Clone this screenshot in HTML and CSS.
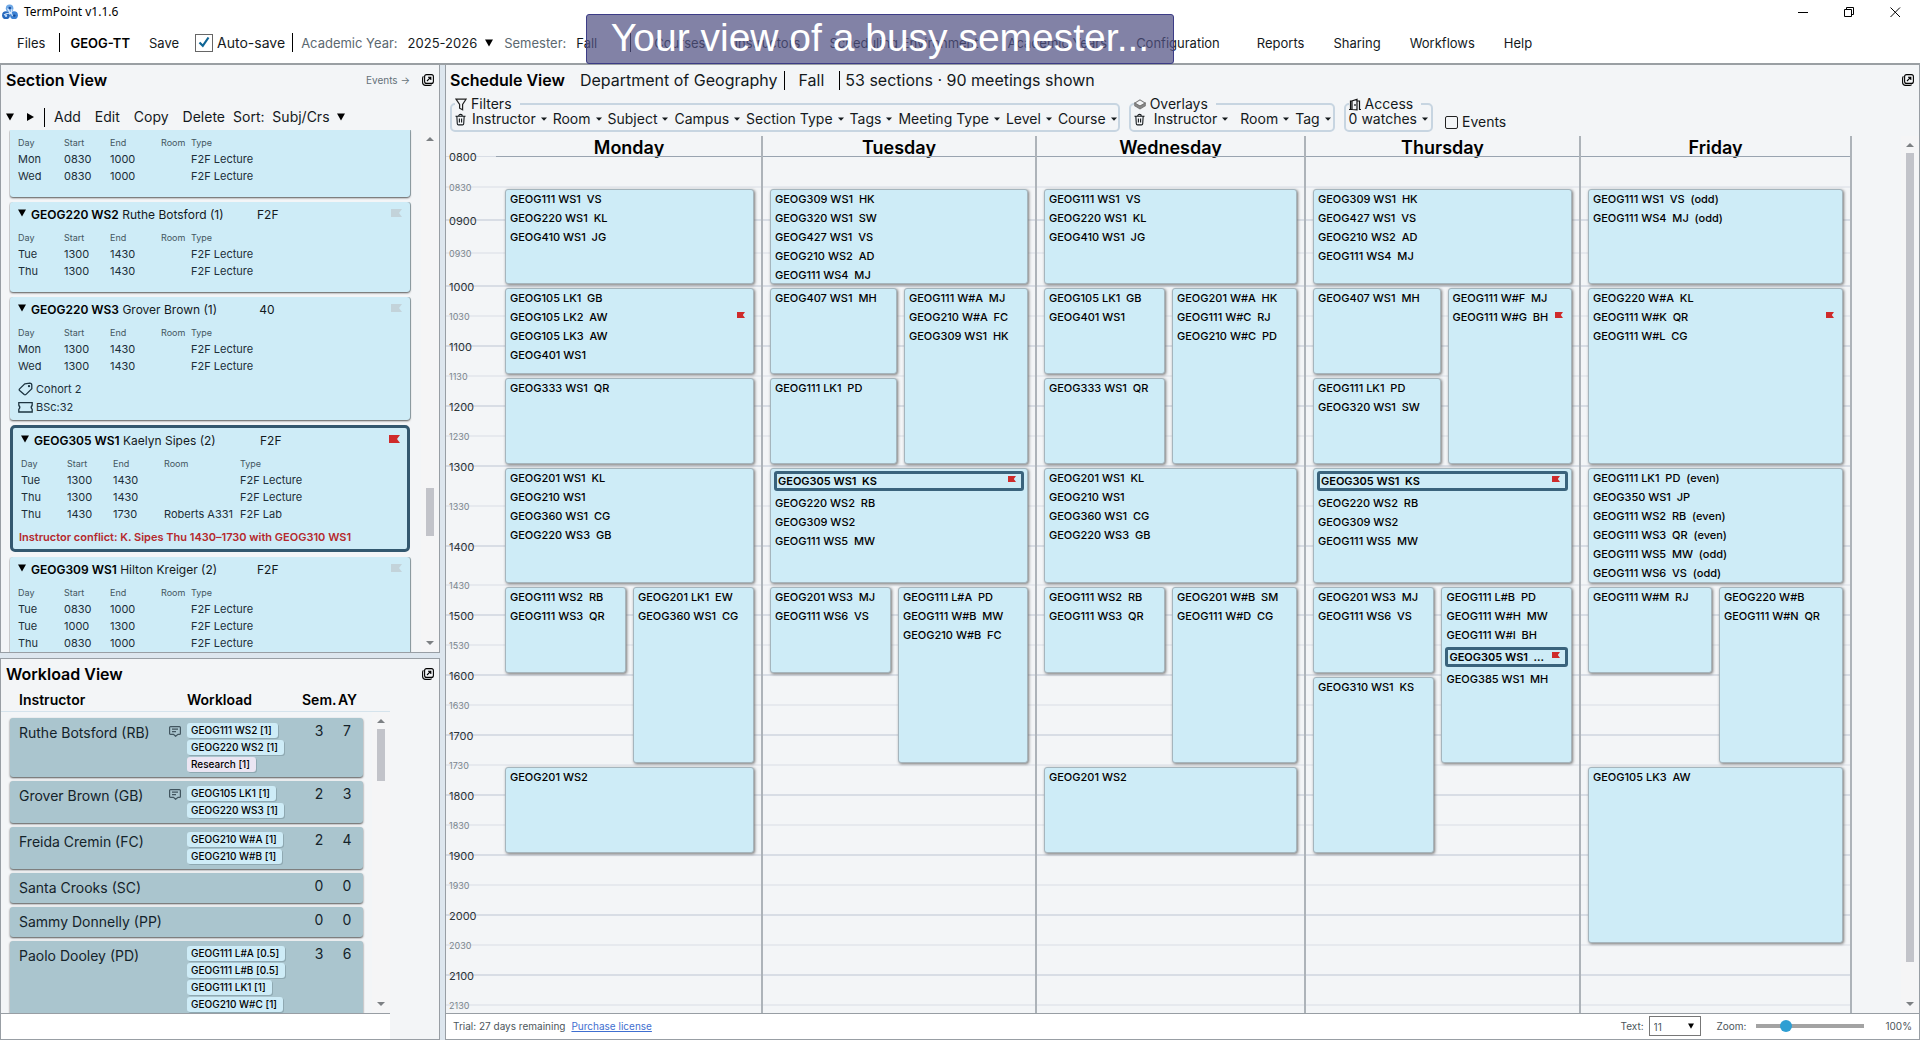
FILE: index.html
```html
<!DOCTYPE html>
<html lang="en">
<head>
<meta charset="utf-8">
<title>TermPoint v1.1.6</title>
<link rel="stylesheet" href="styles.css">
</head>
<body>
<svg class="defs" aria-hidden="true">
  <symbol id="flag" viewBox="0 0 11 8"><path d="M0 0H11L8 4L11 8H0Z" fill="currentColor"/></symbol>
  <symbol id="down" viewBox="0 0 8 8"><path d="M0 0.5H8L4 7.5Z" fill="currentColor"/></symbol>
  <symbol id="caret" viewBox="0 0 6 4"><path d="M0 0.5H6L3 3.8Z" fill="currentColor"/></symbol>
  <symbol id="right" viewBox="0 0 8 8"><path d="M1 0V8L8 4Z" fill="currentColor"/></symbol>
  <symbol id="sb-up" viewBox="0 0 8 4"><path d="M0 4H8L4 0Z" fill="currentColor"/></symbol>
  <symbol id="sb-down" viewBox="0 0 8 4"><path d="M0 0H8L4 4Z" fill="currentColor"/></symbol>
  <symbol id="popout" viewBox="0 0 12 12"><g fill="none" stroke="currentColor" stroke-width="1.1"><rect x="2.6" y="0.6" width="8.8" height="8.8" rx="2"/><path d="M1.4 2.4C0.7 3 .6 3.600.6 4.500V8.500A3 3 0 0 0 3.600 11.400H7.500C8.400 11.400 9 11.300 9.600 10.600M5 7L8.600 3.400M6 3.200H8.800V6"/></g></symbol>
  <symbol id="trash" viewBox="0 0 12 13"><g fill="none" stroke="currentColor" stroke-width="1.2"><path d="M0.500 3H11.500M4 2.800C4 .3 8 .3 8 2.800M2 3L2.500 11.200Q2.600 12.400 3.800 12.400H8.200Q9.400 12.400 9.500 11.200L10 3M4.800 5.500V9.800M7.200 5.500V9.800"/></g></symbol>
  <symbol id="note" viewBox="0 0 12 11"><g fill="none" stroke="currentColor" stroke-width="1.200"><path d="M1.600.6H10.400Q11.400.6 11.400 1.600V7.400Q11.400 8.400 10.400 8.400H9L6.600 10.300L4.500 8.400H1.600Q.6 8.400.6 7.400V1.600Q.6.6 1.600.6ZM3 3.200H9M3 5.600H7"/></g></symbol>
</svg>

<header class="titlebar">
  <svg class="logo" viewBox="0 0 16 16">
    <circle cx="7.600" cy="4.200" r="3.800" fill="#6fa8e6"/><circle cx="4" cy="11.200" r="3.900" fill="#2668bd"/><circle cx="12" cy="11.200" r="3.900" fill="#3c82d4"/>
    <path d="M5.500 4.500Q8 7 7.500 10.500M10 5Q8.500 8 10.500 12M2 11Q5 8.500 9 9.500" fill="none" stroke="#d8e9fb" stroke-width="1.100"/>
    <circle cx="7.800" cy="4" r="1.300" fill="#1c4f9c"/><circle cx="4" cy="11.800" r="1.200" fill="#bcd9f7"/><circle cx="12.300" cy="11.600" r="1.200" fill="#164a96"/>
  </svg>
  <span class="app-name">TermPoint v1.1.6</span>
  <div class="window-buttons">
    <button aria-label="Minimize"><svg width="11" height="11"><path d="M0 5.500H10" stroke="#000"/></svg></button>
    <button aria-label="Restore"><svg width="11" height="11" fill="none" stroke="#000"><path d="M.5 2.500H7.500V9.500H.5ZM2.500 2.500V.5H9.500V7.500H7.500"/></svg></button>
    <button aria-label="Close"><svg width="11" height="11" stroke="#000"><path d="M.5.5L10 10M10 .5L.5 10"/></svg></button>
  </div>
</header>

<nav class="menubar">
  <button>Files</button>
  <i class="sep"></i>
  <strong class="db-name">GEOG-TT</strong>
  <button class="save">Save</button>
  <label class="autosave"><input type="checkbox" checked><svg viewBox="0 0 12 12"><path d="M1.500 6.500L4.800 9.800L10.500 1.500" fill="none" stroke="#0f6595" stroke-width="2.200"/></svg>Auto-save</label>
  <i class="sep"></i>
  <span class="muted">Academic Year:</span>
  <button class="picker">2025-2026 <svg class="i8"><use href="#down"/></svg></button>
  <span class="muted">Semester:</span>
  <button class="picker">Fall</button>
  <i class="sep menu-sep"></i>
  <div class="menu">
    <button>Courses</button><button>Instructors</button><button>Scheduling Environment</button><button>Academic Years</button><button>Configuration</button><button class="apart">Reports</button><button>Sharing</button><button>Workflows</button><button>Help</button>
  </div>
  <div class="banner">Your view of a busy semester...</div>
</nav>

<main class="workspace">
  <div class="side">
    <section class="panel sections">
      <div class="panel-head">
        <h2>Section View</h2>
        <a class="events-link" href="#events">Events →</a>
        <button aria-label="Pop out"><svg class="i12"><use href="#popout"/></svg></button>
      </div>
      <div class="toolbar">
        <button aria-label="Expand all"><svg class="i8"><use href="#down"/></svg></button>
        <button aria-label="Collapse all" class="collapse"><svg class="i8"><use href="#right"/></svg></button>
        <i class="sep"></i>
        <button>Add</button><button>Edit</button><button>Copy</button><button>Delete</button>
        <button class="sort">Sort:&nbsp; Subj/Crs <svg class="i8"><use href="#down"/></svg></button>
      </div>
      <div class="scroller">
        <div class="cards">
          <article class="card card-cut">
            <table class="meet"><thead><tr><th>Day</th><th>Start</th><th>End</th><th>Room</th><th>Type</th></tr></thead>
            <tbody><tr><td>Mon</td><td>0830</td><td>1000</td><td></td><td>F2F Lecture</td></tr>
            <tr><td>Wed</td><td>0830</td><td>1000</td><td></td><td>F2F Lecture</td></tr></tbody></table>
          </article>
          <article class="card">
            <div class="card-title"><svg class="i8"><use href="#down"/></svg><p><b>GEOG220 WS2</b> Ruthe Botsford (1)</p><span class="mode">F2F</span><svg class="flag"><use href="#flag"/></svg></div>
            <table class="meet"><thead><tr><th>Day</th><th>Start</th><th>End</th><th>Room</th><th>Type</th></tr></thead>
            <tbody><tr><td>Tue</td><td>1300</td><td>1430</td><td></td><td>F2F Lecture</td></tr>
            <tr><td>Thu</td><td>1300</td><td>1430</td><td></td><td>F2F Lecture</td></tr></tbody></table>
          </article>
          <article class="card">
            <div class="card-title"><svg class="i8"><use href="#down"/></svg><p><b>GEOG220 WS3</b> Grover Brown (1)</p><span class="mode">40</span><svg class="flag"><use href="#flag"/></svg></div>
            <table class="meet"><thead><tr><th>Day</th><th>Start</th><th>End</th><th>Room</th><th>Type</th></tr></thead>
            <tbody><tr><td>Mon</td><td>1300</td><td>1430</td><td></td><td>F2F Lecture</td></tr>
            <tr><td>Wed</td><td>1300</td><td>1430</td><td></td><td>F2F Lecture</td></tr></tbody></table>
            <ul class="extras">
              <li><svg viewBox="0 0 15 14" fill="none" stroke="#1d3440" stroke-width="1.300"><path d="M6.800 1.800L11.800 1.200Q13.800 1.200 13.800 3.200V6.800L7.800 12.600Q7 13.200 6.200 12.600L1.600 8.500Q.8 7.700 1.600 6.900Z"/><circle cx="11" cy="4.200" r=".5"/></svg>Cohort 2</li>
              <li><svg viewBox="0 0 15 14" fill="none" stroke="#1d3440" stroke-width="1.300"><path d="M.8 2.700H14.200V5.200Q12.200 7.300 14.200 9.400V12H.8V9.400Q2.800 7.300.8 5.200Z"/></svg>BSc:32</li>
            </ul>
          </article>
          <article class="card selected">
            <div class="card-title"><svg class="i8"><use href="#down"/></svg><p><b>GEOG305 WS1</b> Kaelyn Sipes (2)</p><span class="mode">F2F</span><svg class="flag red"><use href="#flag"/></svg></div>
            <table class="meet wide-room"><thead><tr><th>Day</th><th>Start</th><th>End</th><th>Room</th><th>Type</th></tr></thead>
            <tbody><tr><td>Tue</td><td>1300</td><td>1430</td><td></td><td>F2F Lecture</td></tr>
            <tr><td>Thu</td><td>1300</td><td>1430</td><td></td><td>F2F Lecture</td></tr>
            <tr><td>Thu</td><td>1430</td><td>1730</td><td>Roberts A331</td><td>F2F Lab</td></tr></tbody></table>
            <p class="conflict">Instructor conflict: K. Sipes Thu 1430–1730 with GEOG310 WS1</p>
          </article>
          <article class="card">
            <div class="card-title"><svg class="i8"><use href="#down"/></svg><p><b>GEOG309 WS1</b> Hilton Kreiger (2)</p><span class="mode">F2F</span><svg class="flag"><use href="#flag"/></svg></div>
            <table class="meet"><thead><tr><th>Day</th><th>Start</th><th>End</th><th>Room</th><th>Type</th></tr></thead>
            <tbody><tr><td>Tue</td><td>0830</td><td>1000</td><td></td><td>F2F Lecture</td></tr>
            <tr><td>Tue</td><td>1000</td><td>1300</td><td></td><td>F2F Lecture</td></tr>
            <tr><td>Thu</td><td>0830</td><td>1000</td><td></td><td>F2F Lecture</td></tr></tbody></table>
          </article>
        </div>
        <div class="scrollbar sb-sections"><svg><use href="#sb-up"/></svg><div class="track"><i></i></div><svg><use href="#sb-down"/></svg></div>
      </div>
    </section>

    <section class="panel workload">
      <div class="panel-head">
        <h2>Workload View</h2>
        <button aria-label="Pop out"><svg class="i12"><use href="#popout"/></svg></button>
      </div>
      <div class="load-body">
        <div class="load-cols load-head"><span>Instructor</span><span></span><span>Workload</span><span class="num">Sem.</span><span>AY</span></div>
        <div class="scroller">
          <div class="loads">
            <div class="load load-cols"><span class="name">Ruthe Botsford (RB)</span><svg class="note"><use href="#note"/></svg><div class="chips"><span>GEOG111 WS2 [1]</span><span>GEOG220 WS2 [1]</span><span class="other">Research [1]</span></div><span class="num">3</span><span class="num">7</span></div>
            <div class="load load-cols"><span class="name">Grover Brown (GB)</span><svg class="note"><use href="#note"/></svg><div class="chips"><span>GEOG105 LK1 [1]</span><span>GEOG220 WS3 [1]</span></div><span class="num">2</span><span class="num">3</span></div>
            <div class="load load-cols"><span class="name">Freida Cremin (FC)</span><i></i><div class="chips"><span>GEOG210 W#A [1]</span><span>GEOG210 W#B [1]</span></div><span class="num">2</span><span class="num">4</span></div>
            <div class="load load-cols"><span class="name">Santa Crooks (SC)</span><i></i><div class="chips"></div><span class="num">0</span><span class="num">0</span></div>
            <div class="load load-cols"><span class="name">Sammy Donnelly (PP)</span><i></i><div class="chips"></div><span class="num">0</span><span class="num">0</span></div>
            <div class="load load-cols"><span class="name">Paolo Dooley (PD)</span><i></i><div class="chips"><span>GEOG111 L#A [0.5]</span><span>GEOG111 L#B [0.5]</span><span>GEOG111 LK1 [1]</span><span>GEOG210 W#C [1]</span></div><span class="num">3</span><span class="num">6</span></div>
          </div>
          <div class="scrollbar sb-load"><svg><use href="#sb-up"/></svg><div class="track"><i></i></div><svg><use href="#sb-down"/></svg></div>
        </div>
        <div class="load-foot"></div>
      </div>
    </section>
  </div>

  <section class="panel schedule">
    <div class="panel-head">
      <h2>Schedule View</h2>
      <span class="dept">Department of Geography</span><i class="sep"></i><span class="term">Fall</span><i class="sep"></i><span class="counts">53 sections · 90 meetings shown</span>
      <button aria-label="Pop out"><svg class="i12"><use href="#popout"/></svg></button>
    </div>
    <div class="filters">
      <fieldset>
        <legend><svg viewBox="0 0 12 13" fill="none" stroke="#222" stroke-width="1.200"><path d="M1 1.200H11L7.600 6.500V11.800L4.600 10.200V6.500Z"/></svg>Filters</legend>
        <button aria-label="Clear filters"><svg class="trash"><use href="#trash"/></svg></button>
        <button>Instructor<svg class="caret"><use href="#caret"/></svg></button><button>Room<svg class="caret"><use href="#caret"/></svg></button><button>Subject<svg class="caret"><use href="#caret"/></svg></button><button>Campus<svg class="caret"><use href="#caret"/></svg></button><button>Section Type<svg class="caret"><use href="#caret"/></svg></button><button>Tags<svg class="caret"><use href="#caret"/></svg></button><button>Meeting Type<svg class="caret"><use href="#caret"/></svg></button><button>Level<svg class="caret"><use href="#caret"/></svg></button><button>Course<svg class="caret"><use href="#caret"/></svg></button>
      </fieldset>
      <fieldset class="overlays">
        <legend><svg viewBox="0 0 13 13" fill="none" stroke="#777" stroke-width="1.100"><path d="M6.500 1.500L12.200 5L6.500 8.300L.8 5Z"/><path d="M.8 5V7.800L6.500 11.200L12.200 7.800V5L6.500 8.300Z" fill="#8a8a8a"/></svg>Overlays</legend>
        <button aria-label="Clear overlays"><svg class="trash"><use href="#trash"/></svg></button>
        <button class="by-person">Instructor<svg class="caret"><use href="#caret"/></svg></button><button>Room<svg class="caret"><use href="#caret"/></svg></button><button>Tag<svg class="caret"><use href="#caret"/></svg></button>
      </fieldset>
      <fieldset class="access">
        <legend><svg viewBox="0 0 12 12" fill="none" stroke="#111" stroke-width="1.200"><path d="M0 11H3V2.500L8 .8V11.400L3 11M8 2.500H10.500V11H12M6 5.500V7.500M1.500 11V2.500H3"/></svg>Access</legend>
        <button>0 watches<svg class="caret"><use href="#caret"/></svg></button>
      </fieldset>
      <label class="show-events"><input type="checkbox">Events</label>
    </div>

    <div class="timetable">
      <div class="week">
        <div class="day-names"><span></span><h3>Monday</h3><h3>Tuesday</h3><h3>Wednesday</h3><h3>Thursday</h3><h3>Friday</h3></div>
        <div class="grid">
          <div class="times">
            <span>0800</span><span>0830</span><span>0900</span><span>0930</span><span>1000</span><span>1030</span><span>1100</span><span>1130</span><span>1200</span><span>1230</span><span>1300</span><span>1330</span><span>1400</span><span>1430</span><span>1500</span><span>1530</span><span>1600</span><span>1630</span><span>1700</span><span>1730</span><span>1800</span><span>1830</span><span>1900</span><span>1930</span><span>2000</span><span>2030</span><span>2100</span><span>2130</span>
          </div>

          <div class="day">
            <ul class="block" style="grid-row:2/5"><li>GEOG111 WS1  VS</li><li>GEOG220 WS1  KL</li><li>GEOG410 WS1  JG</li></ul>
            <ul class="block" style="grid-row:5/8"><li>GEOG105 LK1  GB</li><li>GEOG105 LK2  AW<svg class="flag"><use href="#flag"/></svg></li><li>GEOG105 LK3  AW</li><li>GEOG401 WS1</li></ul>
            <ul class="block" style="grid-row:8/11"><li>GEOG333 WS1  QR</li></ul>
            <ul class="block" style="grid-row:11/14"><li>GEOG201 WS1  KL</li><li>GEOG210 WS1</li><li>GEOG360 WS1  CG</li><li>GEOG220 WS3  GB</li></ul>
            <div class="split" style="grid-row:14/20">
              <ul class="block" style="grid-row:1/4"><li>GEOG111 WS2  RB</li><li>GEOG111 WS3  QR</li></ul>
              <ul class="block" style="grid-row:1/7"><li>GEOG201 LK1  EW</li><li>GEOG360 WS1  CG</li></ul>
            </div>
            <ul class="block" style="grid-row:20/23"><li>GEOG201 WS2</li></ul>
          </div>

          <div class="day">
            <ul class="block" style="grid-row:2/5"><li>GEOG309 WS1  HK</li><li>GEOG320 WS1  SW</li><li>GEOG427 WS1  VS</li><li>GEOG210 WS2  AD</li><li>GEOG111 WS4  MJ</li></ul>
            <div class="split early" style="grid-row:5/11">
              <ul class="block" style="grid-row:1/4"><li>GEOG407 WS1  MH</li></ul>
              <ul class="block" style="grid-row:4/7"><li>GEOG111 LK1  PD</li></ul>
              <ul class="block second" style="grid-row:1/7"><li>GEOG111 W#A  MJ</li><li>GEOG210 W#A  FC</li><li>GEOG309 WS1  HK</li></ul>
            </div>
            <ul class="block" style="grid-row:11/14"><li class="picked">GEOG305 WS1  KS<svg class="flag"><use href="#flag"/></svg></li><li>GEOG220 WS2  RB</li><li>GEOG309 WS2</li><li>GEOG111 WS5  MW</li></ul>
            <div class="split late" style="grid-row:14/20">
              <ul class="block" style="grid-row:1/4"><li>GEOG201 WS3  MJ</li><li>GEOG111 WS6  VS</li></ul>
              <ul class="block" style="grid-row:1/7"><li>GEOG111 L#A  PD</li><li>GEOG111 W#B  MW</li><li>GEOG210 W#B  FC</li></ul>
            </div>
          </div>

          <div class="day">
            <ul class="block" style="grid-row:2/5"><li>GEOG111 WS1  VS</li><li>GEOG220 WS1  KL</li><li>GEOG410 WS1  JG</li></ul>
            <div class="split midweek" style="grid-row:5/11">
              <ul class="block" style="grid-row:1/4"><li>GEOG105 LK1  GB</li><li>GEOG401 WS1</li></ul>
              <ul class="block" style="grid-row:4/7"><li>GEOG333 WS1  QR</li></ul>
              <ul class="block second" style="grid-row:1/7"><li>GEOG201 W#A  HK</li><li>GEOG111 W#C  RJ</li><li>GEOG210 W#C  PD</li></ul>
            </div>
            <ul class="block" style="grid-row:11/14"><li>GEOG201 WS1  KL</li><li>GEOG210 WS1</li><li>GEOG360 WS1  CG</li><li>GEOG220 WS3  GB</li></ul>
            <div class="split midweek" style="grid-row:14/20">
              <ul class="block" style="grid-row:1/4"><li>GEOG111 WS2  RB</li><li>GEOG111 WS3  QR</li></ul>
              <ul class="block" style="grid-row:1/7"><li>GEOG201 W#B  SM</li><li>GEOG111 W#D  CG</li></ul>
            </div>
            <ul class="block" style="grid-row:20/23"><li>GEOG201 WS2</li></ul>
          </div>

          <div class="day">
            <ul class="block" style="grid-row:2/5"><li>GEOG309 WS1  HK</li><li>GEOG427 WS1  VS</li><li>GEOG210 WS2  AD</li><li>GEOG111 WS4  MJ</li></ul>
            <div class="split early" style="grid-row:5/11">
              <ul class="block" style="grid-row:1/4"><li>GEOG407 WS1  MH</li></ul>
              <ul class="block" style="grid-row:4/7"><li>GEOG111 LK1  PD</li><li>GEOG320 WS1  SW</li></ul>
              <ul class="block second" style="grid-row:1/7"><li>GEOG111 W#F  MJ</li><li>GEOG111 W#G  BH<svg class="flag"><use href="#flag"/></svg></li></ul>
            </div>
            <ul class="block" style="grid-row:11/14"><li class="picked">GEOG305 WS1  KS<svg class="flag"><use href="#flag"/></svg></li><li>GEOG220 WS2  RB</li><li>GEOG309 WS2</li><li>GEOG111 WS5  MW</li></ul>
            <div class="split late" style="grid-row:14/23">
              <ul class="block" style="grid-row:1/4"><li>GEOG201 WS3  MJ</li><li>GEOG111 WS6  VS</li></ul>
              <ul class="block" style="grid-row:4/10"><li>GEOG310 WS1  KS</li></ul>
              <ul class="block second" style="grid-row:1/7"><li>GEOG111 L#B  PD</li><li>GEOG111 W#H  MW</li><li>GEOG111 W#I  BH</li><li class="picked">GEOG305 WS1  ...<svg class="flag"><use href="#flag"/></svg></li><li>GEOG385 WS1  MH</li></ul>
            </div>
          </div>

          <div class="day">
            <ul class="block" style="grid-row:2/5"><li>GEOG111 WS1  VS  (odd)</li><li>GEOG111 WS4  MJ  (odd)</li></ul>
            <ul class="block" style="grid-row:5/11"><li>GEOG220 W#A  KL</li><li>GEOG111 W#K  QR<svg class="flag"><use href="#flag"/></svg></li><li>GEOG111 W#L  CG</li></ul>
            <ul class="block" style="grid-row:11/14"><li>GEOG111 LK1  PD  (even)</li><li>GEOG350 WS1  JP</li><li>GEOG111 WS2  RB  (even)</li><li>GEOG111 WS3  QR  (even)</li><li>GEOG111 WS5  MW  (odd)</li><li>GEOG111 WS6  VS  (odd)</li></ul>
            <div class="split" style="grid-row:14/20">
              <ul class="block" style="grid-row:1/4"><li>GEOG111 W#M  RJ</li></ul>
              <ul class="block" style="grid-row:1/7"><li>GEOG220 W#B</li><li>GEOG111 W#N  QR</li></ul>
            </div>
            <ul class="block" style="grid-row:20/26"><li>GEOG105 LK3  AW</li></ul>
          </div>
        </div>
      </div>
      <div class="scrollbar sb-week"><svg><use href="#sb-up"/></svg><div class="track"><i></i></div><svg><use href="#sb-down"/></svg></div>
    </div>

    <footer class="status">
      <span>Trial: 27 days remaining</span>
      <a href="#license">Purchase license</a>
      <label class="text-size" for="size">Text:</label>
      <span class="select"><select id="size"><option>11</option></select><svg class="i8"><use href="#down"/></svg></span>
      <label class="zoom-label" for="zoom">Zoom:</label>
      <input id="zoom" type="range" min="0" max="100" value="25">
      <output for="zoom">100%</output>
    </footer>
  </section>
</main>
</body>
</html>
```
FILE: styles.css
```css
* { box-sizing: border-box; }

body {
  margin: 0;
  height: 100vh;
  display: flex;
  flex-direction: column;
  overflow: hidden;
  background: #fff;
  color: #14191c;
  font-family: Inter, "Liberation Sans", sans-serif;
  font-size: 14px;
  line-height: 20px;
}

h2, h3, p, ul { margin: 0; padding: 0; }
ul { list-style: none; }
svg { display: block; flex: none; }
button {
  display: flex;
  align-items: center;
  padding: 0;
  border: 0;
  background: none;
  color: inherit;
  font: inherit;
  white-space: nowrap;
}
.defs { position: absolute; width: 0; height: 0; }
.i8 { width: 8px; height: 8px; color: #000; }
.i12 { width: 12px; height: 12px; color: #000; }
.sep { width: 1px; height: 19px; background: #000; flex: none; }

/* Title bar */
.titlebar { display: flex; align-items: center; height: 24px; padding-left: 2px; }
.logo { width: 16px; height: 16px; }
.app-name { margin-left: 6px; font: 12px/20px "Noto Sans", sans-serif; color: #000; flex: 1; }
.window-buttons { display: flex; gap: 35px; padding-right: 19px; }

/* Menu bar */
.menubar {
  position: relative;
  display: flex;
  align-items: center;
  height: 41px;
  padding: 0 0 2px 17px;
  border-bottom: 2px solid #9a9fa3;
  font-size: 13px;
  white-space: nowrap;
}
.menubar > .sep { margin: 0 10px 0 14px; }
.menubar .db-name { font-weight: 600; color: #000; }
.menubar .save { margin: 0 16px 0 19px; }
.autosave { display: flex; align-items: center; position: relative; font-size: 14px; }
.autosave input {
  appearance: none;
  width: 18px;
  height: 18px;
  margin: 0 4px 0 0;
  border: 1px solid #666;
}
.autosave svg { position: absolute; left: 3px; top: 3px; width: 12px; height: 12px; }
.menubar > .autosave + .sep { margin: 0 8px 0 7px; }
.muted { color: #5b6870; }
.picker { gap: 8px; margin: 0 11px 0 10px; }
.menubar > .menu-sep { margin: 0 23px 0 22px; }
.menu { display: flex; gap: 29px; }
.menu .apart { margin-left: 8px; }
.banner {
  position: absolute;
  left: 586px;
  top: -10px;
  width: 588px;
  height: 50px;
  border: 1px solid #3c3c86;
  border-radius: 3px;
  background: rgba(82, 82, 132, 0.72);
  color: #fff;
  font: 39px/46px "Liberation Sans", sans-serif;
  text-align: center;
}

/* Workspace */
.workspace {
  flex: 1;
  min-height: 0;
  display: grid;
  grid-template-columns: 440px minmax(0, 1fr);
  grid-template-rows: minmax(0, 1fr);
  gap: 5px;
  background: #dde6ee;
}
.side { display: grid; grid-template-rows: minmax(0, 588fr) minmax(0, 382fr); gap: 5px; }
.panel {
  display: flex;
  flex-direction: column;
  min-height: 0;
  min-width: 0;
  border: 1px solid #989ea4;
  border-top: 0;
  background: #f3f5f7;
}
.workload { border-top: 1px solid #989ea4; }
.panel-head { display: flex; align-items: center; flex: none; height: 30px; padding: 0 5px; }
.panel-head h2 { font-size: 16px; font-weight: 600; color: #000; margin-right: auto; }
.events-link { margin-right: 12px; color: #65727a; font-size: 10px; text-decoration: none; }

.toolbar { display: flex; align-items: center; flex: none; gap: 14px; height: 35px; padding: 9px 5px 0; }
.toolbar .collapse { margin-left: -2px; }
.toolbar .sep { margin: 0 -5px 0 -4px; }
.toolbar .sort { gap: 7px; margin-left: -6px; }

.scroller { flex: 1; min-height: 0; display: flex; }
.scrollbar { display: flex; flex-direction: column; align-items: center; width: 18px; padding: 7px 0; color: #7d8083; background: #f5f5f6; }
.scrollbar svg { width: 8px; height: 4px; }
.track { flex: 1; display: grid; margin: 6px 0; }
.track i { width: 8px; background: #c2c3c9; grid-row: 2; }
.sb-sections .track { grid-template-rows: 347fr 48fr 101fr; }
.sb-load .track { grid-template-rows: 0 52fr 217fr; }
.sb-week .track { grid-template-rows: 0 810fr 34fr; }

/* Section cards */
.cards { flex: 1; display: flex; flex-direction: column; gap: 5px; padding: 0 11px 0 9px; overflow: hidden; }
.card {
  flex: none;
  height: 90px;
  padding: 3px 8px 0;
  border-radius: 3px;
  background: #ceecf7;
  box-shadow: 0 1px 2px #555, 1px 0 0 #9fb3bb;
  clip-path: inset(0 -2px -3px -1px);
  font-size: 12px;
}
.card:nth-child(n+3) { height: auto; padding-bottom: 4px; }
.card-cut { height: 67px; padding-top: 5px; border-radius: 0 0 3px 3px; }
.card-title { display: grid; grid-template-columns: 13px 226px 20px 1fr; align-items: center; height: 20px; margin-bottom: 5px; white-space: nowrap; }
.card-title .i8 { margin-bottom: 5px; }
.card-title b { font-weight: 600; color: #000; }
.mode { text-align: center; }
.flag { width: 11px; height: 8px; margin: 0 0 5px auto; color: #c3d3da; }
.flag.red { color: #cf2b2b; }
.meet { border-collapse: collapse; table-layout: fixed; width: 300px; font-size: 11px; line-height: 17px; color: #1c2e38; }
.meet th, .meet td { padding: 0; text-align: left; font-weight: 400; white-space: nowrap; height: 17px; }
.meet th { font-size: 9px; line-height: 16px; height: 16px; color: #435661; width: 46px; }
.meet th:nth-child(3) { width: 51px; }
.meet th:nth-child(4) { width: 30px; }
.meet.wide-room th:nth-child(4) { width: 76px; }
.meet th:last-child { width: auto; }
.extras { margin-top: 5px; font-size: 11px; line-height: 18px; color: #1c2e38; }
.extras li { display: flex; align-items: center; gap: 3px; }
.extras svg { width: 15px; height: 14px; }
.card.selected { padding: 3px 7px 3px 8px; border: 3px solid #33586f; border-radius: 5px; box-shadow: none; }
.conflict { margin: 5px 0 0 -2px; color: #b5282c; font-size: 11px; font-weight: 600; line-height: 18px; }

/* Workload */
.load-body { flex: 1; min-height: 0; width: 389px; display: flex; flex-direction: column; }
.load-cols { display: grid; grid-template-columns: 150px 18px 115px 36px 1fr; }
.load-head { height: 23px; padding: 1px 18px 0; border-bottom: 1px solid #d5e3ec; color: #000; font-weight: 600; }
.loads { flex: 1; display: flex; flex-direction: column; gap: 4px; padding: 6px 9px 0 9px; overflow: hidden; }
.load {
  flex: none;
  min-height: 29px;
  padding: 5px 7px 5px 9px;
  border-radius: 3px;
  background: #aac5ce;
  box-shadow: 0 1px 2px #555;
  color: #14232a;
}
.load { grid-template-columns: 150px 18px 115px 34px 22px; }
.name { white-space: nowrap; }
.note { width: 12px; height: 11px; margin-top: 3px; color: #41555f; }
.load .num { text-align: center; line-height: 16px; }
.chips { display: flex; flex-direction: column; align-items: flex-start; gap: 2px; }
.chips span { padding: 0 6px 0 4px; border-radius: 3px; background: #ceecf7; box-shadow: 1px 1px 0 #8fa9b2; font-size: 10px; font-weight: 500; line-height: 15px; color: #000; white-space: nowrap; }
.chips .other { background: #ebe6f3; }
.load-foot { flex: none; height: 26px; border-top: 1px solid #989ea4; background: #fff; }

/* Schedule */
.schedule .panel-head { font-size: 16px; padding: 0 5px 0 4px; white-space: nowrap; }
.schedule .panel-head h2 { margin-right: 15px; }
.schedule .panel-head .sep { margin: 0 5px 0 7px; }
.term { margin: 0 8px; }
.counts { margin-right: auto; }

.filters { display: flex; align-items: flex-start; flex: none; height: 41px; padding: 0 4px; gap: 9px; }
fieldset {
  display: flex;
  gap: 6px;
  min-width: 0;
  height: 37px;
  margin: 0;
  padding: 0 1px 0 3px;
  border: 2px solid #c7d5e1;
  border-radius: 5px;
}
legend { display: flex; align-items: center; gap: 4px; height: 18px; padding: 0 8px 0 0; }
legend svg { width: 12px; height: 13px; }
fieldset button { gap: 5px; height: 12px; }
.caret { width: 6px; height: 4px; }
.trash { width: 11px; height: 13px; }
.overlays { padding: 0 2px 0 3px; }
.by-person { margin: 0 6px 0 3px; }
.access { padding: 0 3px; }
.show-events { display: flex; align-items: center; gap: 4px; margin: 17px 0 0 3px; }
.show-events input { appearance: none; width: 13px; height: 13px; margin: 0; border: 1px solid #222; border-radius: 2px; }

.timetable { flex: 1; min-height: 0; display: flex; }
.week {
  --cols: 51px minmax(0, 266fr) minmax(0, 274fr) minmax(0, 269fr) minmax(0, 275fr) minmax(0, 271fr);
  flex: 1;
  margin-right: 49px;
  overflow: hidden;
}
.day-names { display: grid; grid-template-columns: var(--cols); height: 20px; }
.day-names h3 { height: 20px; border-right: 2px solid #adb3b9; font-size: 18px; font-weight: 600; line-height: 24px; text-align: center; color: #000; }
.grid {
  display: grid;
  grid-template-columns: var(--cols);
  grid-template-rows: 30px repeat(3, 33px) repeat(6, 30px) 40px 40px 39px repeat(15, 30px);
}
.times { grid-area: 1 / 1 / -1 / -1; display: grid; grid-template-rows: subgrid; }
.times span { padding-left: 3px; border-top: 2px solid #d8dde5; font-size: 11px; line-height: 0; color: #2b3338; }
.times span:nth-child(even) { border-color: #e6e9ee; font-size: 9px; color: #7a858d; }
.times span:first-child { border-image: linear-gradient(90deg, #d8dde5 51px, #99a4b0 51px) 1; border-top-width: 1px; border-style: solid none none; }
.day { grid-row: 1 / -1; display: grid; grid-template-rows: subgrid; padding: 0 7px; border-right: 2px solid #adb3b9; min-width: 0; }
.day:nth-child(2) { grid-column: 2; padding-left: 8px; }
.day:nth-child(3) { grid-column: 3; }
.day:nth-child(4) { grid-column: 4; }
.day:nth-child(5) { grid-column: 5; }
.day:nth-child(6) { grid-column: 6; }
.split { display: grid; grid-template-rows: subgrid; grid-template-columns: minmax(0, 1fr) minmax(0, 1fr); column-gap: 7px; min-width: 0; }
.split.early { grid-template-columns: minmax(0, 127fr) minmax(0, 124fr); }
.split.midweek { grid-template-columns: minmax(0, 121fr) minmax(0, 125fr); }
.split.late { grid-template-columns: minmax(0, 121fr) minmax(0, 130fr); }
.second { grid-column: 2; }
.block {
  min-width: 0;
  margin: 3px 0 1px;
  border: 1px solid #a5b5bd;
  border-radius: 3px;
  background: #ceecf7;
  box-shadow: 1px 1px 3px #777;
  overflow: hidden;
  font-size: 11px;
  font-weight: 500;
  line-height: 19px;
  color: #000;
}
.block li { display: flex; align-items: center; height: 19px; padding: 0 8px 0 4px; white-space: pre; }
.block .flag { width: 8px; height: 6px; color: #cf2b2b; }
.block .picked { height: 20px; margin: 2px 3px 3px; padding: 0 5px 0 1px; border: 3px solid #3a637c; border-radius: 3px; font-weight: 600; }

/* Status bar */
.status { display: flex; align-items: center; flex: none; height: 26px; padding: 0 7px 2px; border-top: 1px solid #989ea4; background: #fff; font-size: 10px; color: #4c565c; }
.status a { margin: 0 auto 0 6px; color: #3f6fd0; }
.select { display: flex; align-items: center; position: relative; margin: 0 16px 0 5px; }
.select select { appearance: none; width: 52px; height: 20px; padding: 0 4px; border: 1px solid #777; border-radius: 0; background: #fff; font: inherit; color: #4c565c; }
.select svg { position: absolute; right: 6px; top: 7px; width: 8px; height: 6px; }
#zoom { appearance: none; width: 108px; height: 4px; margin: 0 21px 0 10px; background: #a3a3a3; }
#zoom::-webkit-slider-thumb { appearance: none; width: 12px; height: 12px; border-radius: 50%; background: #2f9fd3; }
```
